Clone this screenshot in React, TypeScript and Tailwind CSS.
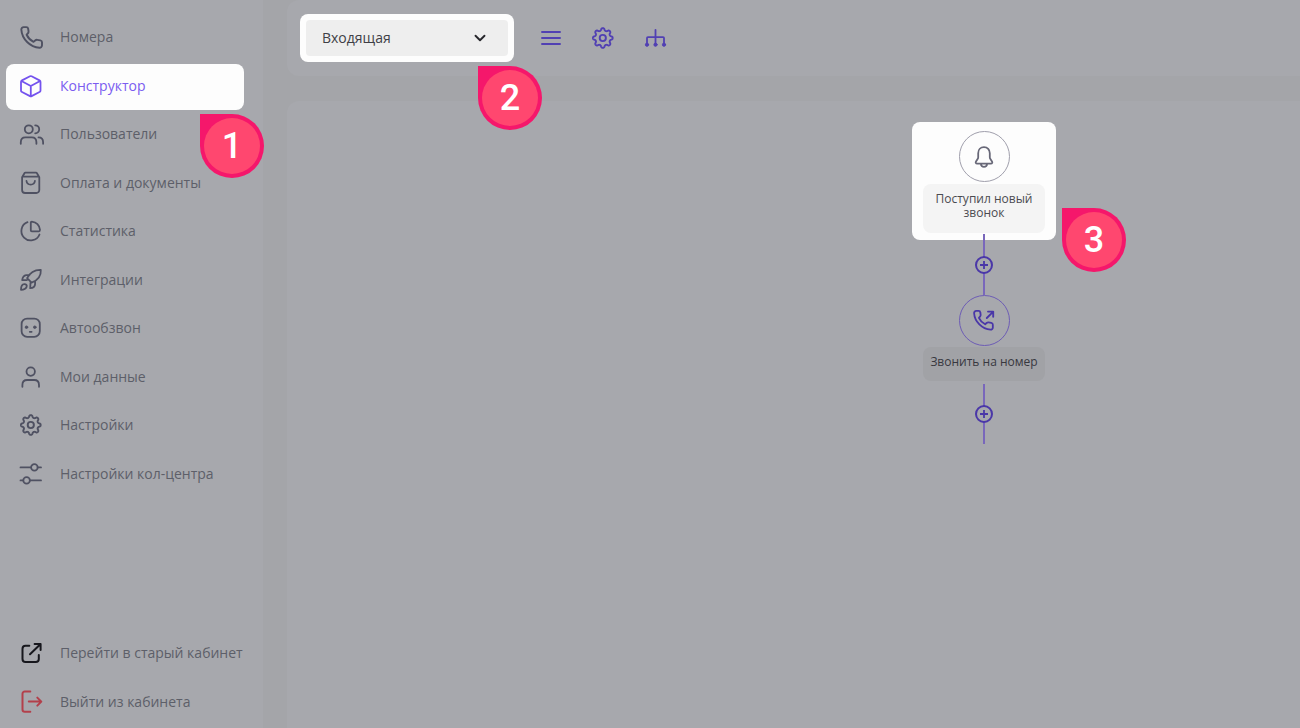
import React from 'react';
import { ChevronDown } from 'lucide-react';

interface NavItem {
  label: string;
  icon: React.ReactNode;
  active?: boolean;
}

const Icon: React.FC<{ children: React.ReactNode; className?: string; strokeWidth?: number }> = ({
  children,
  className = '',
  strokeWidth = 1.8,
}) => (
  <svg
    viewBox="0 0 24 24"
    fill="none"
    stroke="currentColor"
    strokeWidth={strokeWidth}
    strokeLinecap="round"
    strokeLinejoin="round"
    aria-hidden="true"
    className={`size-6 shrink-0 overflow-visible ${className}`}
  >
    {children}
  </svg>
);

// Eight-tooth outline, sampled around the circle
const gearPath =
  Array.from({ length: 160 }, (_, i) => {
    const a = (i / 160) * Math.PI * 2;
    const r = 8.7 + 1.3 * Math.tanh(1.4 * Math.cos(a * 8));
    return `${i ? 'L' : 'M'}${(11.8 + r * Math.cos(a)).toFixed(2)} ${(12 + r * Math.sin(a)).toFixed(2)}`;
  }).join('') + 'Z';

const GearIcon = () => (
  <Icon strokeWidth={1.9}>
    <path d={gearPath} />
    <circle cx="11.8" cy="12" r="3.1" />
  </Icon>
);

const handset =
  'M4.4 2h2.5c.9 0 1.6.6 1.7 1.4l.4 2.5c.1.9-.1 1.500-.7 2.100L7.200 9.200c1.300 2.900 3.600 5.200 6.500 6.700l1.500-1.300c.6-.5 1.300-.7 2-.6l2.900.5c.9.2 1.600.9 1.600 1.800v2.900c0 1.300-1.100 2.400-2.400 2.300C10.500 20.900 2.800 13.300 2.200 4.400 2.100 3.100 3.100 2 4.400 2Z';

const navItems: NavItem[] = [
  {
    label: 'Номера',
    icon: <Icon><path transform="scale(1.06)" d={handset} /></Icon>,
  },
  {
    label: 'Конструктор',
    active: true,
    icon: (
      <Icon>
        <path d="M11 2.3a1.8 1.8 0 0 1 1.6 0l7.9 4.1c.6.3 1 .9 1 1.6v8.4c0 .7-.4 1.3-1 1.6l-7.9 4.1a1.8 1.8 0 0 1-1.6 0L3 18c-.6-.3-1-.9-1-1.6V8c0-.7.4-1.3 1-1.6ZM2.4 7l9.4 5 9.3-5M11.8 12v10" />
      </Icon>
    ),
  },
  {
    label: 'Пользователи',
    icon: (
      <Icon>
        <circle cx="9.8" cy="7.3" r="4" />
        <path d="M1.8 21.8v-1.6c0-2.8 1.8-4.8 4.6-4.8h6.4c2.8 0 4.6 2 4.6 4.8v1.6M16.2 3.3a4 4 0 0 1 0 8M19.5 15.4c2.8 0 4.6 2 4.6 4.8v1.6" />
      </Icon>
    ),
  },
  {
    label: 'Оплата и документы',
    icon: (
      <Icon>
        <path d="M3.1 6.2 5.6 2c.2-.3.4-.4.7-.4h10.8c.3 0 .5.1.7.4l2.5 4.2V19a3 3 0 0 1-3 3H6.1a3 3 0 0 1-3-3ZM3.5 5.6h16.4M7.5 10c.3 2.3 2 3.6 4.2 3.6s3.9-1.3 4.2-3.6" />
      </Icon>
    ),
  },
  {
    label: 'Статистика',
    icon: (
      <Icon>
        <path d="M11.8 3.5c0-.6.4-.9 1-.9 4.3.5 7.6 3.7 8.2 8.2 0 .9-.4 1.5-1 1.5h-7.2c-.6 0-1-.4-1-1ZM8.5 3.2a9.4 9.4 0 1 0 12 12.3" />
      </Icon>
    ),
  },
  {
    label: 'Интеграции',
    icon: (
      <Icon>
        <path d="M21.8 1.9c.4 5.8-2.8 10.400-9.200 12.700l-4.500-4.400C11 4.600 15.500 1.700 21.800 1.900ZM10.600 6.900l-3.400.3C4.700 7.600 3.500 9.800 3.200 12l4.700.1M11.500 14.600l-.3 5.600c2.800 0 4.800-1.700 4.900-4.300v-2.500M2 21.800c0-3 .6-5.600 3.300-5.700 1.900-.1 2.900 1.300 2.300 2.800-.8 2.100-2.900 2.900-5.600 2.900Z" />
      </Icon>
    ),
  },
  {
    label: 'Автообзвон',
    icon: (
      <Icon>
        <rect x="2.6" y="2.6" width="18.2" height="18.2" rx="5.5" />
        <circle cx="7.5" cy="11.2" r="1.3" fill="currentColor" strokeWidth="0.8" />
        <circle cx="15.8" cy="11.2" r="1.3" fill="currentColor" strokeWidth="0.8" />
        <path d="M10.8 15.8h1.8" />
      </Icon>
    ),
  },
  {
    label: 'Мои данные',
    icon: (
      <Icon>
        <circle cx="11.7" cy="6.6" r="4.2" />
        <path d="M3.4 21.8V20c0-3 1.8-5 4.8-5h7c3 0 4.8 2 4.8 5v1.800" />
      </Icon>
    ),
  },
  { label: 'Настройки', icon: <GearIcon /> },
  {
    label: 'Настройки кол-центра',
    icon: (
      <Icon>
        <path d="M1.5 5.4h10.600M18.700 5.400H22M1.500 18.400h2.700M11 18.400h11" />
        <circle cx="15.4" cy="5.4" r="3.3" />
        <circle cx="7.6" cy="18.4" r="3.3" />
      </Icon>
    ),
  },
];

const Pin: React.FC<{ step: number; className: string }> = ({ step, className }) => (
  <span className={`absolute z-20 size-16 rounded-full rounded-tl-none bg-[#f5176b] p-1 ${className}`}>
    <span className="flex size-full items-center justify-center rounded-full bg-[#ff476f] font-[Roboto,sans-serif] text-4xl font-medium text-white">
      {step}
    </span>
  </span>
);

const SidebarLink: React.FC<{ item: NavItem; children?: React.ReactNode }> = ({ item, children }) => (
  <li className="relative flex flex-1">
    {item.active && <span className="absolute right-[19px] bottom-0 left-1.5 h-[46px] rounded-lg bg-[#fdfdfd]" />}
    <a
      href="#"
      className={`relative flex flex-1 items-center gap-[17px] pl-[19px] whitespace-nowrap ${item.active ? 'text-[#7452ee]' : 'text-[#4f5162]'}`}
    >
      {item.icon}
      <span className={item.active ? 'text-[#7b5cf0]' : 'text-[#5d5f69]'}>{item.label}</span>
    </a>
    {children}
  </li>
);

const Connector: React.FC<{ className: string }> = ({ className }) => (
  <div className={`relative flex w-0.5 items-center justify-center bg-[#7967bb] ${className}`}>
    <button
      type="button"
      aria-label="Добавить"
      className="flex size-[18px] shrink-0 items-center justify-center rounded-full border-2 border-[#4a37a8] bg-[#a7a8ad] text-[#4a37a8]"
    >
      <svg viewBox="0 0 10 10" className="size-2.5" stroke="currentColor" strokeWidth="1.8" aria-hidden="true">
        <path d="M5 1v8M1 5h8" />
      </svg>
    </button>
  </div>
);

export default function App() {
  return (
    <div className="flex min-h-screen bg-[#a4a5a9] font-['Open_Sans',sans-serif] text-sm">
      <aside className="flex w-[263px] shrink-0 flex-col justify-between bg-[#a7a8ad] pt-[13px] pb-0.5">
        <nav>
          <ul className="flex h-[485px] flex-col">
            {navItems.map((item) => (
              <SidebarLink key={item.label} item={item}>
                {item.active && <Pin step={1} className="top-[52px] left-[200px]" />}
              </SidebarLink>
            ))}
          </ul>
        </nav>

        <ul className="flex h-[97px] flex-col">
          <SidebarLink
            item={{
              label: 'Перейти в старый кабинет',
              icon: (
                <Icon strokeWidth={2} className="text-[#17171d]">
                  <path d="M10.3 4.8H6.5a3 3 0 0 0-3 3V18a3 3 0 0 0 3 3h10.300a3 3 0 0 0 3-3v-4M11 13.300 21.600 3M15.600 2.900h6v6" />
                </Icon>
              ),
            }}
          />
          <SidebarLink
            item={{
              label: 'Выйти из кабинета',
              icon: (
                <Icon strokeWidth={2} className="text-[#b3404b]">
                  <path d="M11.3 1.5H5.800a2.300 2.300 0 0 0-2.300 2.300v15.700a2.300 2.300 0 0 0 2.300 2.300h5.500M9.800 11.600h12.400M18.300 7.600l4 4-4 4" />
                </Icon>
              ),
            }}
          />
        </ul>
      </aside>

      <main className="flex min-w-0 flex-1 flex-col gap-[25px] pl-6">
        {/* Toolbar */}
        <header className="flex h-[76px] items-start rounded-l-xl bg-[#a7a8ad] pt-3.5 pl-[13px] text-[#5140b3]">
          <div className="relative h-12 w-[214px] rounded-lg bg-[#fdfdfd] p-1.5">
            <select
              aria-label="Схема"
              className="h-full w-full appearance-none rounded bg-[#eee] px-4 text-sm text-[#3f3f46]"
            >
              <option>Входящая</option>
            </select>
            <ChevronDown
              size={18}
              strokeWidth={2.5}
              className="pointer-events-none absolute top-[15px] right-[25px] text-[#26262b]"
            />
            <Pin step={2} className="top-[52px] left-[178px]" />
          </div>
          <div className="ml-[25px] flex h-12 items-center gap-7">
            <button type="button" aria-label="Меню">
              <Icon strokeWidth={1.9}><path d="M3 6h18M3 12h18M3 18h18" /></Icon>
            </button>
            <button type="button" aria-label="Параметры">
              <GearIcon />
            </button>
            <button type="button" aria-label="Структура">
              <Icon>
                <path d="M12.5 3.8v14.500M4 18.300V12c0-.6.3-.9.9-.9h15.200c.6 0 .9.3.9.9v6.300" />
                <g fill="currentColor" strokeWidth="1">
                  <circle cx="4" cy="18.7" r="1.6" />
                  <circle cx="12.5" cy="18.7" r="1.6" />
                  <circle cx="21" cy="18.7" r="1.6" />
                </g>
              </Icon>
            </button>
          </div>
        </header>

        {/* Scheme canvas */}
        <section className="relative flex-1 rounded-tl-xl bg-[#a7a8ad] text-xs leading-[14px]">
          <div className="absolute top-[21px] left-[625px] flex w-36 flex-col items-center text-center">
            <div className="relative flex h-[118px] w-full flex-col items-center gap-0.5 rounded-lg bg-[#fdfdfd] pt-[9px]">
              <div className="flex size-[51px] items-center justify-center rounded-full border border-[#a09fac] text-[#686878]">
                <Icon>
                  <path d="M12 2.2c-3.500 0-5.800 2.600-5.800 6v4.100c0 .7-.2 1.200-.6 1.800L4 16.400c-.7 1.100-.2 2.200 1.100 2.200h13.800c1.300 0 1.800-1.100 1.100-2.200l-1.600-2.300c-.4-.6-.6-1.100-.6-1.800V8.200c0-3.400-2.300-6-5.800-6ZM8.900 18.800c.2 1.900 1.500 3 3.100 3s2.900-1.100 3.100-3" />
                </Icon>
              </div>
              <div className="h-[49px] w-[122px] rounded-lg bg-[#f4f4f4] pt-2 text-[#4b4b50]">Поступил новый звонок</div>
              <Pin step={3} className="top-[86px] left-[150px]" />
            </div>
            <Connector className="-mt-1.5 h-[61px]" />
            <div className="flex size-[51px] items-center justify-center rounded-full border border-[#6d5cb5] text-[#4a37a8]">
              <Icon strokeWidth={1.9}>
                <path transform="scale(0.96)" d={handset} />
                <path d="M14.8 9 21 2.800M16 2.600h5.200v5.200" />
              </Icon>
            </div>
            <div className="mt-px h-[34px] w-[122px] rounded-lg bg-[#a1a2a6] pt-2 whitespace-nowrap text-[#38383f]">
              Звонить на номер
            </div>
            <Connector className="mt-[3px] h-[60px]" />
          </div>
        </section>
      </main>
    </div>
  );
}
